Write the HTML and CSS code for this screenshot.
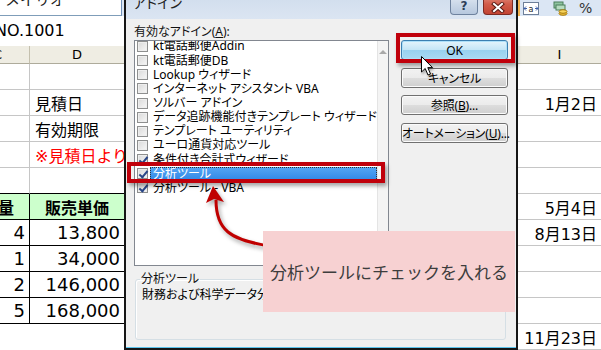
FILE: index.html
```html
<!DOCTYPE html>
<html lang="ja">
<head>
<meta charset="UTF-8">
<title>アドイン</title>
<link rel="stylesheet" href="styles.css">
</head>
<body>
<div id="screen">
    <div class="sheet">
        <div class="toolbar">
            <div class="fontbox"><span>メイリオ</span></div>
            <div class="tb-gap"></div>
            <div class="tools">
                <svg class="ico-merge" width="16" height="13" viewBox="0 0 16 13">
                    <rect x="0.5" y="0.5" width="15" height="12" fill="#fff" stroke="#6d7f99"/>
                    <path d="M1 6.5h3M15 6.5h-3M1 6.5l2-2M1 6.5l2 2M15 6.5l-2-2M15 6.5l-2 2" stroke="#3b5ea8" fill="none"/>
                    <text x="8" y="9.5" font-size="8" text-anchor="middle" font-family="DejaVu Sans" fill="#222">a</text>
                </svg>
                <svg class="ico-money" width="15" height="15" viewBox="0 0 15 15">
                    <rect x="1" y="1" width="9" height="6" fill="#8fc4a0" stroke="#4a7f5b"/>
                    <rect x="3" y="4" width="9" height="5" fill="#b7dcc0" stroke="#4a7f5b"/>
                    <ellipse cx="10" cy="12.5" rx="4" ry="1.8" fill="#f2c23a" stroke="#a67a10"/>
                    <ellipse cx="10" cy="10.5" rx="4" ry="1.8" fill="#f7d45c" stroke="#a67a10"/>
                </svg>
                <span class="pct">%</span>
            </div>
        </div>
        <div class="namerow"><span>NO.1001</span></div>
        <div class="row head">
            <div class="cell c"><span class="cut">C</span></div>
            <div class="cell d">D</div>
            <div class="cell x"></div>
            <div class="cell i">I</div>
        </div>
        <div class="row">
            <div class="cell c"></div><div class="cell d"></div><div class="cell x"></div><div class="cell i"></div>
        </div>
        <div class="row">
            <div class="cell c"></div><div class="cell d">見積日</div><div class="cell x"></div><div class="cell i">1月2日</div>
        </div>
        <div class="row">
            <div class="cell c"></div><div class="cell d">有効期限</div><div class="cell x"></div><div class="cell i"></div>
        </div>
        <div class="row">
            <div class="cell c"></div><div class="cell d red">※見積日より</div><div class="cell x"></div><div class="cell i"></div>
        </div>
        <div class="row edge">
            <div class="cell c"></div><div class="cell d"></div><div class="cell x"></div><div class="cell i"></div>
        </div>
        <div class="row tbl">
            <div class="cell c green th"><span class="cut2">量</span></div><div class="cell d green th">販売単価</div><div class="cell x"></div><div class="cell i">5月4日</div>
        </div>
        <div class="row tbl">
            <div class="cell c num">4</div><div class="cell d num">13,800</div><div class="cell x"></div><div class="cell i">8月13日</div>
        </div>
        <div class="row tbl">
            <div class="cell c num">1</div><div class="cell d num">34,000</div><div class="cell x"></div><div class="cell i"></div>
        </div>
        <div class="row tbl">
            <div class="cell c num">2</div><div class="cell d num">146,000</div><div class="cell x"></div><div class="cell i"></div>
        </div>
        <div class="row tbl">
            <div class="cell c num">5</div><div class="cell d num">168,000</div><div class="cell x"></div><div class="cell i"></div>
        </div>
        <div class="row last">
            <div class="cell c"></div><div class="cell d"></div><div class="cell x"></div><div class="cell i">11月23日</div>
        </div>
    </div>

    <div class="dialog">
        <div class="titlebar">
            <span class="title">アドイン</span>
            <span class="capbtn help">?</span>
            <span class="capbtn close">
                <svg width="14" height="11" viewBox="0 0 14 11">
                    <path d="M3 2l8 7M11 2l-8 7" stroke="#5a1a14" stroke-width="4" stroke-linecap="square"/>
                    <path d="M3 2l8 7M11 2l-8 7" stroke="#fff" stroke-width="2" stroke-linecap="square"/>
                </svg>
            </span>
        </div>
        <div class="dlg-body">
            <div class="lbl">有効なアドイン(<u>A</u>):</div>
            <div class="listbox">
                <ul class="items">
                    <li><i class="chk"></i><span>kt電話郵便Addin</span></li>
                    <li><i class="chk"></i><span>kt電話郵便DB</span></li>
                    <li><i class="chk"></i><span>Lookup ウィザード</span></li>
                    <li><i class="chk"></i><span>インターネット アシスタント VBA</span></li>
                    <li><i class="chk"></i><span>ソルバー アドイン</span></li>
                    <li><i class="chk"></i><span>データ追跡機能付きテンプレート ウィザード</span></li>
                    <li><i class="chk"></i><span>テンプレート ユーティリティ</span></li>
                    <li><i class="chk"></i><span>ユーロ通貨対応ツール</span></li>
                    <li><i class="chk on"></i><span>条件付き合計式ウィザード</span></li>
                    <li class="sel"><i class="chk on"></i><span>分析ツール</span></li>
                    <li><i class="chk on"></i><span>分析ツール - VBA</span></li>
                </ul>
                <div class="vscroll"><span class="up"></span></div>
            </div>
            <div class="buttons">
                <button class="btn default">OK</button>
                <button class="btn">キャンセル</button>
                <button class="btn">参照(<u>B</u>)...</button>
                <button class="btn">オートメーション(<u>U</u>)...</button>
            </div>
            <fieldset class="group">
                <legend>分析ツール</legend>
                <p>財務および科学データ分析用のツールを追加します。</p>
            </fieldset>
        </div>
    </div>

    <!-- 注釈 -->
    <div class="mark mark-ok"></div>
    <div class="mark mark-item"></div>
    <svg class="arrow" width="90" height="75" viewBox="0 0 90 75">
        <path d="M21 20 C21 50 35 60 75 66" fill="none" stroke="#c00000" stroke-width="3"/>
        <path d="M18 6 L11 23 L19 19 L29 22 Z" fill="#c00000"/>
    </svg>
    <div class="callout">分析ツールにチェックを入れる</div>
    <svg class="cursor" width="14" height="21" viewBox="0 0 14 21">
        <path d="M0.5 0.5 V16 L4.2 12.5 L7 19 L9.5 18 L6.8 11.6 H11.5 Z" fill="#fff" stroke="#000" stroke-linejoin="round"/>
    </svg>
</div>
</body>
</html>
```

FILE: styles.css
```css
*{
    margin: 0;
    padding: 0;
    box-sizing: border-box;
}
ul{
    list-style: none;
}
body{
    background: #fff;
    font-family: "DejaVu Sans", "Noto Sans CJK JP", sans-serif;
}
#screen{
    position: relative;
    width: 601px;
    height: 350px;
    overflow: hidden;
}

/* シート */
.sheet{
    display: flex;
    flex-direction: column;
}
.toolbar{
    display: flex;
    height: 16px;
    background: #dbe6f4;
}
.fontbox{
    width: 122px;
    background: #fff;
    border-right: 1px solid #6f8fb8;
    border-bottom: 1px solid #7f9db9;
    padding-left: 5px;
    overflow: hidden;
}
.fontbox span{
    display: block;
    margin-top: -7px;
    font-size: 15px;
    line-height: 15px;
    color: #222;
}
.tb-gap{
    flex: 1;
}
.tools{
    width: 83px;
    display: flex;
    align-items: center;
    border-left: 2px solid #f2b350;
    padding-left: 3px;
}
.ico-money{
    margin-left: 14px;
}
.pct{
    margin-left: 11px;
    font-size: 14px;
    color: #333;
}
.namerow{
    height: 30px;
    display: flex;
    align-items: center;
    padding-bottom: 2px;
    font-size: 16px;
}
.namerow span{
    margin-left: -5px;
}
.row{
    display: grid;
    grid-template-columns: 30px 94px 394px 83px;
    height: 26px;
}
.cell{
    display: flex;
    align-items: center;
    border-bottom: 1px solid #c6c6c6;
    font-size: 16px;
    white-space: nowrap;
    overflow: visible;
}
.c{
    border-right: 1px solid #c6c6c6;
    justify-content: flex-end;
    padding-right: 4px;
}
.d{
    padding-left: 5px;
}
.i{
    justify-content: flex-end;
    padding-right: 4px;
}
.num{
    justify-content: flex-end;
    padding-right: 4px;
    font-size: 18px;
}
.red{
    color: #ff0000;
}
.head{
    height: 18px;
    background: #efede3;
}
.head .cell{
    font-size: 13px;
    border-bottom-color: #aeab9b;
}
.head .c{
    border-right-color: #c4c0ae;
    justify-content: flex-start;
    padding: 0;
    overflow: hidden;
}
.head .d, .head .i{
    justify-content: center;
    padding: 0;
}
.cut{
    margin-left: -7px;
}
.edge .c, .edge .d{
    border-bottom-color: #000;
}
.tbl .c, .tbl .d{
    border-color: #000;
}
.green{
    background: #ccffcc;
}
.th{
    font-weight: bold;
}
.th.c{
    justify-content: flex-start;
    padding: 0;
    overflow: hidden;
}
.th.d{
    justify-content: center;
    padding: 0;
}
.cut2{
    margin-left: -2px;
}
.last .c, .last .d{
    border: none;
}

/* ダイアログ */
.dialog{
    position: absolute;
    left: 124px;
    top: -10px;
    width: 394px;
    height: 360px;
    background: #f0f0f0;
    border: 2px solid #161616;
    box-shadow: inset 0 -1px 0 #5cc4ec;
    font-family: "Noto Sans", "Noto Sans CJK JP", sans-serif;
    font-feature-settings: "palt";
    font-size: 12px;
    display: flex;
    flex-direction: column;
}
.titlebar{
    height: 27px;
    display: flex;
    align-items: flex-start;
    padding-left: 7px;
    padding-right: 3px;
    background: linear-gradient(#cfdcec, #dbe5f2);
}
.title{
    margin-top: 2px;
    font-size: 14px;
    line-height: 18px;
    color: #222;
}
.capbtn{
    height: 23px;
    display: flex;
    align-items: flex-end;
    justify-content: center;
    padding-bottom: 2px;
    border: 1px solid #6e829e;
    border-top: none;
    border-radius: 0 0 4px 4px;
}
.help{
    width: 28px;
    margin-left: auto;
    background: linear-gradient(#e9eff7, #cbd8e8 55%, #b7c8de);
    color: #2c3e57;
    font-family: "DejaVu Sans", sans-serif;
    font-weight: bold;
    font-size: 12px;
    line-height: 12px;
}
.close{
    width: 30px;
    margin-left: 5px;
    border-color: #7d2a22;
    background: linear-gradient(#e9a597, #d25c4a 55%, #c24433);
    padding-bottom: 1px;
}
.dlg-body{
    flex: 1;
    display: grid;
    grid-template-columns: 255px 107px;
    grid-template-rows: 17px 226px auto;
    column-gap: 12px;
    padding: 4px 8px 0 8px;
}
.lbl{
    line-height: 17px;
    color: #111;
}
.listbox{
    grid-row: 2;
    display: flex;
    background: #fff;
    border: 1px solid #828790;
    overflow: hidden;
}
.items{
    flex: 1;
    padding-left: 2px;
    margin-top: -1.6px;
}
.items li{
    height: 14.15px;
    display: flex;
    align-items: center;
    white-space: nowrap;
    line-height: 14px;
}
.chk{
    position: relative;
    width: 11px;
    height: 11px;
    margin-right: 2px;
    border: 1px solid #8e8f8f;
    background: linear-gradient(135deg, #d9d9d9, #f7f7f7);
    box-shadow: inset 0 0 0 1px #eeeeee;
}
.chk.on::after{
    content: "";
    position: absolute;
    left: 3px;
    top: 0;
    width: 3px;
    height: 7px;
    border-right: 2px solid #2b4788;
    border-bottom: 2px solid #2b4788;
    transform: rotate(40deg);
}
.items li span{
    flex: 1;
    padding-left: 3px;
}
.items li.sel span{
    background: linear-gradient(#56a6f4, #2f86e6);
    color: #fff;
    outline: 1px dotted #333;
    outline-offset: -1px;
}
.vscroll{
    width: 17px;
    background: #f4f4f4;
    border-left: 1px solid #e4e4e4;
    display: flex;
    justify-content: center;
}
.up{
    margin-top: 9px;
    width: 0;
    height: 0;
    border-left: 4px solid transparent;
    border-right: 4px solid transparent;
    border-bottom: 4px solid #a9a9a9;
}
.buttons{
    grid-row: 2;
    grid-column: 2;
    display: flex;
    flex-direction: column;
    gap: 7.5px;
}
.btn{
    height: 20px;
    padding: 0;
    white-space: nowrap;
    border: 1px solid #707070;
    border-radius: 3px;
    background: linear-gradient(#f2f2f2, #ebebeb 50%, #dddddd 51%, #cfcfcf);
    box-shadow: inset 0 0 0 1px #fbfbfb;
    font-family: inherit;
    font-feature-settings: "palt";
    font-size: 12px;
    letter-spacing: -0.2px;
    color: #000;
}
.btn.default{
    border-color: #3c7fb1;
    background: linear-gradient(#e5f4fc, #c4e5f6 50%, #98d1ef 51%, #a9daf2);
    box-shadow: inset 0 0 0 1px #aee0f9;
}
.group{
    grid-column: 1 / 3;
    margin: 6px 2px 0 1px;
    height: 68px;
    border: 1px solid #d5dfe5;
    border-radius: 3px;
    box-shadow: inset 1px 1px 0 #fff;
    padding: 0 6px 0 4px;
    min-width: 0;
}
.group legend{
    padding: 0 1px;
    line-height: 14px;
    color: #111;
}
.group p{
    margin: 1px 0 0 2px;
    line-height: 15px;
    white-space: nowrap;
    overflow: hidden;
}

/* 注釈 */
.mark{
    position: absolute;
    border: 4px solid #c0000b;
    box-shadow: 2px 3px 4px rgba(0,0,0,.35);
}
.mark-ok{
    left: 396px;
    top: 33px;
    width: 119px;
    height: 30px;
}
.mark-item{
    left: 127px;
    top: 162px;
    width: 258px;
    height: 21px;
}
.arrow{
    position: absolute;
    left: 195px;
    top: 180px;
    filter: drop-shadow(2px 3px 2px rgba(0,0,0,.35));
}
.callout{
    position: absolute;
    left: 263px;
    top: 231px;
    width: 252px;
    height: 81px;
    background: #f7d1d2;
    padding-left: 7px;
    display: flex;
    align-items: center;
    font-family: "Noto Sans CJK JP", sans-serif;
    font-size: 17px;
    color: #3d3d3d;
    white-space: nowrap;
}
.cursor{
    position: absolute;
    left: 421px;
    top: 56px;
    filter: drop-shadow(1px 2px 1px rgba(0,0,0,.3));
}
```
